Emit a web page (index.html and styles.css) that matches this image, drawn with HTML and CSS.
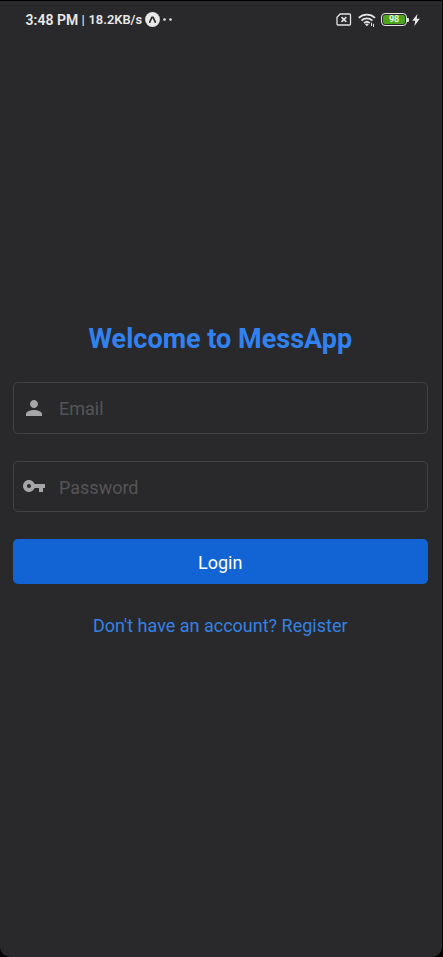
FILE: index.html
```html
<!DOCTYPE html>
<html lang="en">
<head>
<meta charset="utf-8">
<title>MessApp</title>
<link rel="stylesheet" href="styles.css">
</head>
<body>
<div class="screen">
  <header class="status">
    <div class="status-left">
      <span class="time">3:48 PM</span><span class="divider">|</span><span class="speed">18.2KB/s</span>
      <svg class="expo" width="15" height="15" viewBox="0 0 15 15"><circle cx="7.5" cy="7.5" r="7.4" fill="#e8e8e8"/><path d="M4.700 10.200 7 5.200h1l2.300 5" fill="none" stroke="#29292b" stroke-width="1.600" stroke-linecap="round" stroke-linejoin="round"/></svg>
      <svg class="dots" width="10" height="4" viewBox="0 0 10 4"><circle cx="1.500" cy="1.500" r="1.300" fill="#e8e8e8"/><circle cx="7.500" cy="1.500" r="1.300" fill="#e8e8e8"/></svg>
    </div>
    <div class="status-right">
      <svg width="16" height="13" viewBox="0 0 16 13" fill="none" stroke="#e4e4e4"><path d="M4.200 1h9.300a1 1 0 0 1 1 1v9a1 1 0 0 1-1 1H2a1 1 0 0 1-1-1V4.200z" stroke-width="1.300"/><path d="m5.500 4.100 4.800 4.800m0-4.800L5.500 8.900" stroke-width="1.500"/></svg>
      <svg class="wifi" width="18" height="14" viewBox="0 0 18 14" fill="none" stroke="#e4e4e4" stroke-width="1.800"><path d="M.8 4.800c4.600-4.300 11.600-4.300 16.200 0M3.400 7.600c3.200-3 7.800-3 11 0M6 10.100c1.800-1.600 4-1.600 5.800 0"/><path d="m8.900 13.200-1.900-2q1.900-1.300 3.800 0z" fill="#e4e4e4" stroke="none"/><path d="M13.500 9.800v3.200m2-2.200v3.200" stroke-width="1"/></svg>
      <div class="battery"><div class="charge">98</div></div>
      <i class="battery-tip"></i>
      <svg class="bolt" width="8" height="12" viewBox="0 0 8 12"><path d="M5.400 0 .2 6.700h3L2.400 12l5.400-7.200H4.700z" fill="#e8e8e8"/></svg>
    </div>
  </header>
  <main class="login">
    <h1>Welcome to MessApp</h1>
    <label class="field">
      <svg width="24" height="24" viewBox="0 0 24 24"><path fill="#a6a6a7" d="M12 12c2.210 0 4-1.790 4-4s-1.790-4-4-4-4 1.790-4 4 1.790 4 4 4zm0 2c-2.670 0-8 1.340-8 4v2h16v-2c0-2.660-5.330-4-8-4z"/></svg>
      <input type="text" placeholder="Email">
    </label>
    <label class="field password">
      <svg width="24" height="24" viewBox="0 0 24 24"><path fill="#a6a6a7" d="M12.650 10C11.830 7.670 9.610 6 7 6c-3.310 0-6 2.690-6 6s2.690 6 6 6c2.610 0 4.830-1.670 5.650-4H17v4h4v-4h2v-4H12.650zM7 14c-1.100 0-2-.9-2-2s.9-2 2-2 2 .9 2 2-.9 2-2 2z"/></svg>
      <input type="password" placeholder="Password">
    </label>
    <button class="submit" type="button">Login</button>
    <a class="register">Don't have an account? Register</a>
  </main>
</div>
</body>
</html>
```
FILE: styles.css
```css
* { box-sizing: border-box; }
body { margin: 0; background: #000; font-family: Roboto, sans-serif; }
.screen {
  width: 442px;
  height: 956px;
  margin-top: 1px;
  background: #29292b;
  border-radius: 0 0 10px 10px;
  border-right: 1px solid #303032;
  overflow: hidden;
}
.status {
  height: 37px;
  padding: 0 21px 0 25.500px;
  display: flex;
  align-items: center;
  justify-content: space-between;
  color: #e8e8e8;
}
.status-left, .status-right { display: flex; align-items: center; }
.status-left { font-size: 12.900px; font-weight: 600; line-height: 16px; white-space: nowrap; }
.time { width: 53px; font-size: 14px; letter-spacing: 0.050px; }
.divider { width: 10px; padding-left: 3px; font-weight: 500; }
.speed { width: 56.500px; }
.dots { margin-left: 3px; }
.wifi { margin-left: 6px; }
.battery {
  width: 26px;
  height: 13px;
  margin-left: 5px;
  padding: 1px;
  border: 1.500px solid #e4e4e4;
  border-radius: 4px;
}
.charge {
  height: 9px;
  border-radius: 2px;
  background: #4ca61b;
  color: #fff;
  font-size: 9px;
  font-weight: 500;
  line-height: 9.500px;
  text-align: center;
}
.battery-tip { width: 2px; height: 4px; background: #e4e4e4; border-radius: 0 1px 1px 0; }
.bolt { margin-left: 3px; }
.login {
  padding: 285px 13px 0 12.500px;
  display: flex;
  flex-direction: column;
}
h1 {
  margin: 0 0 27px;
  color: #3182f0;
  font-size: 27px;
  font-weight: 700;
  line-height: 32px;
  text-align: center;
}
.field {
  height: 52px;
  margin-bottom: 27px;
  padding-left: 8.500px;
  border: 1px solid #424244;
  border-radius: 5px;
  display: flex;
  align-items: center;
}
.field svg { flex: none; margin-top: -1px; }
.field input {
  width: 300px;
  margin-left: 13px;
  padding: 1px 0 0;
  border: 0;
  outline: 0;
  background: transparent;
  color: #ddd;
  font: 18px/22px Roboto, sans-serif;
}
.field input::placeholder { color: #555557; opacity: 1; }
.password { height: 51px; }
.password input { padding-top: 2px; }
.submit {
  height: 45px;
  margin-bottom: 31px;
  padding: 2px 0 0;
  border: 0;
  border-radius: 5px;
  background: #1264d5;
  color: #fff;
  font: 18px/22px Roboto, sans-serif;
}
.register { color: #3482e5; font-size: 18px; line-height: 22px; text-align: center; }
```
